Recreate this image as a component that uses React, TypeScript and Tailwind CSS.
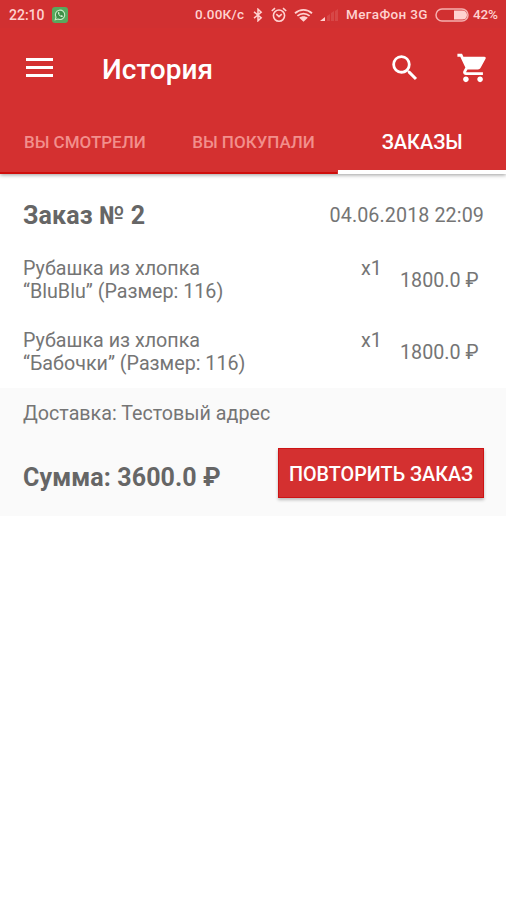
import React from "react";

const items = [
  { name: "Рубашка из хлопка", detail: "“BluBlu” (Размер: 116)" },
  { name: "Рубашка из хлопка", detail: "“Бабочки” (Размер: 116)" },
];

function StatusBar() {
  return (
    <div className="flex h-7 items-center whitespace-nowrap bg-[#d13031] pt-[2px] text-[13.5px] font-medium leading-none text-[#ffd2d0]">
      <span className="ml-[9px] w-[43px] text-[14px]">22:10</span>
      <svg className="h-4 w-4 shrink-0" viewBox="0 0 16 16">
        <rect width="16" height="16" rx="3" fill="#58a85d" />
        <path d="M3.2 12.8l.8-2.6a4.7 4.7 0 1 1 1.9 1.8z" fill="#3f8f48" stroke="#c9ecc5" strokeWidth="1.1" />
        <path d="M6 5.2c-.6 2 2.2 5 4.4 4.8l.6-1.1-1.5-.8-.7.6c-.8-.3-1.4-1-1.7-1.7l.5-.7-.6-1.3z" fill="#d5f1d1" />
      </svg>
      <span className="ml-[127px] w-[58px] tracking-[0.2px]">0.00К/с</span>
      <svg className="h-[14px] w-[10px] shrink-0" viewBox="0 0 10 14" fill="none" stroke="currentColor" strokeWidth="1.5">
        <path d="M1 3.8l7.2 6L5 12.8V1.2l3.2 3L1 10.2" />
      </svg>
      <svg className="ml-[8px] h-4 w-4 shrink-0" viewBox="0 0 16 16" fill="none" stroke="currentColor" strokeWidth="1.6">
        <circle cx="8" cy="8.6" r="5.6" />
        <path d="M.8 4L4 1.2M15.2 4L12 1.2M5.3 7.2L8 9.6l2.8-2.4" />
      </svg>
      <svg className="ml-[7px] h-[14px] w-[19px] shrink-0" viewBox="0 0 19 14" fill="none" stroke="currentColor" strokeWidth="1.8">
        <path d="M1 5.2c5-4.4 12-4.4 17 0M3.400 7.900c3.600-3.100 8.600-3.100 12.200 0" />
        <path d="M5.200 9.700c2.600-2 6-2 8.600 0L9.500 13.800z" fill="currentColor" stroke="none" />
      </svg>
      <svg className="ml-[7px] h-[14px] w-[20px] shrink-0" viewBox="0 0 20 14" fill="currentColor">
        <path d="M0 13l5-4v4z" />
        <path d="M7 13V8l3-2v7zM11 13V5l3-2v10zM15 13V3l3-2v12z" opacity=".14" />
      </svg>
      <span className="ml-[6px] w-[89px] tracking-[0.35px]">МегаФон 3G</span>
      <svg className="h-[14px] w-[35px] shrink-0" viewBox="0 0 35 14">
        <rect x="1" y="1" width="32" height="12" rx="6" fill="none" stroke="#f5b0af" strokeWidth="1.500" />
        <path d="M19 2.500h8.500a4.500 4.500 0 0 1 0 9H19z" fill="#ffd2d0" />
      </svg>
      <span className="ml-[3px] tracking-[-0.2px]">42%</span>
    </div>
  );
}

function AppBar() {
  return (
    <div className="flex h-[82px] items-center pb-[2px] text-white">
      <button className="ml-[26px] flex h-[23px] w-[28px] flex-col justify-between pb-[3px] pt-[1px]">
        <span className="h-[3px] w-[27px] bg-white" />
        <span className="h-[3px] w-[27px] bg-white" />
        <span className="h-[3px] w-[27px] bg-white" />
      </button>
      <h1 className="ml-[48px] w-[280px] pt-[4px] text-[28px] font-medium leading-none">История</h1>
      <svg className="ml-[6px] h-[34px] w-[34px] shrink-0" viewBox="0 0 24 24" fill="currentColor">
        <path d="M15.500 14h-.79l-.28-.27A6.471 6.471 0 0 0 16 9.500 6.500 6.500 0 1 0 9.500 16c1.610 0 3.090-.59 4.230-1.570l.27.280v.790l5 4.990L20.490 19l-4.990-5zm-6 0C7.010 14 5 11.990 5 9.500S7.010 5 9.500 5 14 7.010 14 9.500 11.990 14 9.500 14z" />
      </svg>
      <svg className="ml-[34px] h-[34px] w-[34px] shrink-0" viewBox="0 0 24 24" fill="currentColor">
        <path d="M7 18c-1.100 0-1.990.9-1.990 2S5.900 22 7 22s2-.9 2-2-.9-2-2-2zM1 2v2h2l3.600 7.590-1.350 2.450c-.16.280-.25.610-.25.960 0 1.100.9 2 2 2h12v-2H7.420c-.14 0-.25-.11-.25-.25l.03-.12.900-1.630h7.450c.75 0 1.410-.41 1.750-1.030l3.580-6.490A1.003 1.003 0 0 0 20 4H5.210l-.94-2H1zm16 16c-1.100 0-1.990.9-1.990 2s.89 2 1.990 2 2-.9 2-2-.9-2-2-2z" />
      </svg>
    </div>
  );
}

export default function App() {
  return (
    <div className="min-h-[900px] w-[506px] overflow-hidden bg-white font-['Roboto',sans-serif] text-[#757575]">
      <header className="h-[174px] bg-[#d43030] shadow-[0_1px_4px_rgba(0,0,0,0.4)]">
        <StatusBar />
        <AppBar />
        <nav className="grid h-16 grid-cols-3 grid-rows-[64px] whitespace-nowrap text-center text-[17px] font-medium leading-[64px] text-[#f28f8c]">
          <span className="h-16 border-b-2 border-[#cf0e0c] pl-[1px]">ВЫ СМОТРЕЛИ</span>
          <span className="h-16 border-b-2 border-[#cf0e0c] pl-[1px]">ВЫ ПОКУПАЛИ</span>
          <span className="ml-[1px] h-16 border-b-4 border-white text-[20px] text-white">ЗАКАЗЫ</span>
        </nav>
      </header>
      <main>
        <section className="h-[214px] pl-[23px] pr-[22px] pt-[27px] text-[19.700px] leading-[23px]">
          <div className="flex h-[56px] items-start justify-between leading-[30px]">
            <h2 className="text-[25px] font-bold tracking-[0.1px] text-[#666]">Заказ № 2</h2>
            <time className="tracking-[0.1px]">04.06.2018 22:09</time>
          </div>
          <div className="flex flex-col gap-[26px]">
            {items.map((item) => (
              <div key={item.detail} className="flex h-[46px] whitespace-nowrap">
                <p className="w-[338px]">
                  {item.name}
                  <br />
                  {item.detail}
                </p>
                <span className="w-[39px]">x1</span>
                <span className="pt-[12px]">1800.0 ₽</span>
              </div>
            ))}
          </div>
        </section>
        <section className="h-32 bg-[#fafafa] pl-[23px] pr-[22px] pt-[14px]">
          <p className="text-[19.700px] leading-[24px]">Доставка: Тестовый адрес</p>
          <div className="mt-[22px] flex h-[50px] items-center justify-between">
            <strong className="pt-[10px] text-[25px] font-bold leading-[30px] tracking-[0.1px] text-[#666]">Сумма: 3600.0 ₽</strong>
            <button className="h-[50px] w-[206px] whitespace-nowrap border border-[#cd1415] bg-[#d43030] pt-[3px] text-[19.800px] font-medium text-white shadow-[0_2px_3px_rgba(0,0,0,0.25)]">
              ПОВТОРИТЬ ЗАКАЗ
            </button>
          </div>
        </section>
      </main>
    </div>
  );
}
